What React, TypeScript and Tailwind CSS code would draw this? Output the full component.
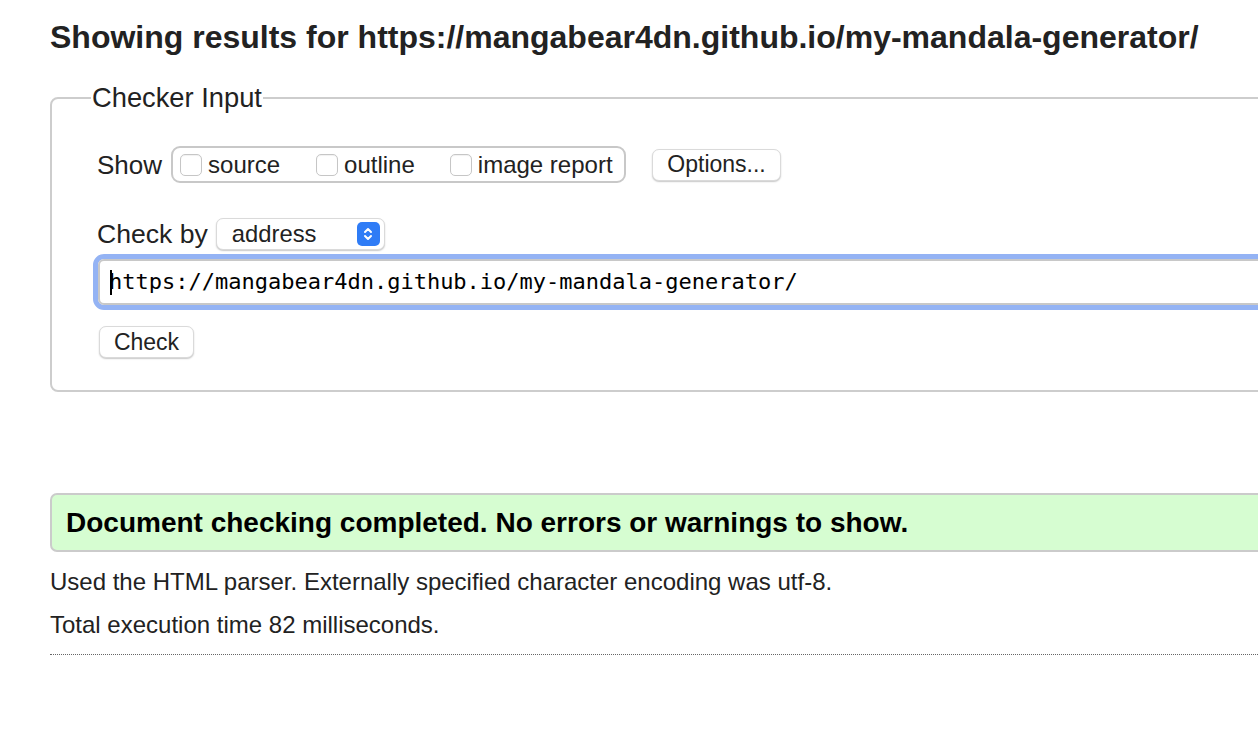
import React from 'react';

const sans = "font-['Liberation_Sans',Arial,sans-serif]";

function Box({ label }: { label: string }) {
  return (
    <label className="flex items-center">
      <span className="h-[22px] w-[22px] rounded-[5px] border border-[#c6c6c6] bg-white shadow-[inset_0_1px_1px_rgba(0,0,0,0.06)]" />
      <span className="ml-[6px] text-[24px] leading-none text-[#222]">{label}</span>
    </label>
  );
}

function MacButton({ children, className = '' }: { children: React.ReactNode; className?: string }) {
  return (
    <button
      className={`flex h-[32px] items-center justify-center rounded-[7px] border border-[#dadada] bg-white text-[23px] leading-none text-[#222] shadow-[0_1px_1.5px_rgba(0,0,0,0.22)] ${className}`}
    >
      {children}
    </button>
  );
}

export default function App() {
  return (
    <div className={`h-[730px] w-[1258px] overflow-hidden bg-white ${sans} text-[#222]`}>
      <div className="pl-[50px] pt-[19px]">
        <h2 className="whitespace-nowrap text-[32px] font-bold leading-[36px] text-[#222]">
          Showing results for https://mangabear4dn.github.io/my-mandala-generator/
        </h2>

        <fieldset className="mt-[29px] w-[1300px] rounded-[8px] border-2 border-[#cdcdcd] pb-[32px] pl-[45px]">
          <legend className="-ml-[6px] px-[1px] text-[27.3px] leading-[28px] text-[#222]">Checker Input</legend>

          <div className="mt-[34px] flex items-center">
            <span className="text-[26px] leading-none">Show</span>
            <div className="ml-[9px] flex h-[37px] w-[455px] items-center rounded-[9px] border-2 border-[#c8c8c8] pl-[7px]">
              <Box label="source" />
              <span className="w-[36px]" />
              <Box label="outline" />
              <span className="w-[35px]" />
              <Box label="image report" />
            </div>
            <MacButton className="ml-[26px] w-[129px]">Options...</MacButton>
          </div>

          <div className="mt-[35px] flex items-center">
            <span className="text-[26.6px] leading-none">Check by</span>
            <div className="ml-[8px] flex h-[32px] w-[169px] items-center justify-between rounded-[7px] border border-[#dadada] bg-white pl-[15px] pr-[4px] shadow-[0_1px_1.5px_rgba(0,0,0,0.22)]">
              <span className="text-[23.8px] leading-none">address</span>
              <span className="flex h-[24px] w-[23px] items-center justify-center rounded-[5px] bg-[#2f7cf6]">
                <svg width="12" height="16" viewBox="0 0 12 16" fill="none" stroke="white" strokeWidth="2" strokeLinecap="round" strokeLinejoin="round">
                  <path d="M3 6 L6 3 L9 6" />
                  <path d="M3 10 L6 13 L9 10" />
                </svg>
              </span>
            </div>
          </div>

          <div className="-ml-[4px] mt-[4px] rounded-[11px] border-[5px] border-[#94b3f4]">
            <div className="relative flex h-[46px] items-center rounded-[6px] border-2 border-[#c8c8c8] bg-white pl-[9px]">
              <span className="absolute left-[10px] top-[9px] h-[25px] w-[2px] bg-black" />
              <span className="font-['DejaVu_Sans_Mono',monospace] text-[22px] leading-none text-black">
                https://mangabear4dn.github.io/my-mandala-generator/
              </span>
            </div>
          </div>

          <MacButton className="ml-[2px] mt-[16px] w-[95px]">Check</MacButton>
        </fieldset>

        <div className="mt-[101px] flex h-[59px] w-[1300px] items-center rounded-[7px] border-2 border-[#cbcbcb] bg-[#d6fdd1] pl-[14px]">
          <p className="text-[28px] font-bold leading-none text-black">
            Document checking completed. No errors or warnings to show.
          </p>
        </div>

        <p className="mt-[16px] text-[24px] leading-[28px] text-[#222]">
          Used the HTML parser. Externally specified character encoding was utf-8.
        </p>
        <p className="mt-[15px] text-[24px] leading-[28px] text-[#222]">Total execution time 82 milliseconds.</p>
        <div className="mt-[15px] w-[1300px] border-b border-dotted border-[#666]" />
      </div>
    </div>
  );
}
